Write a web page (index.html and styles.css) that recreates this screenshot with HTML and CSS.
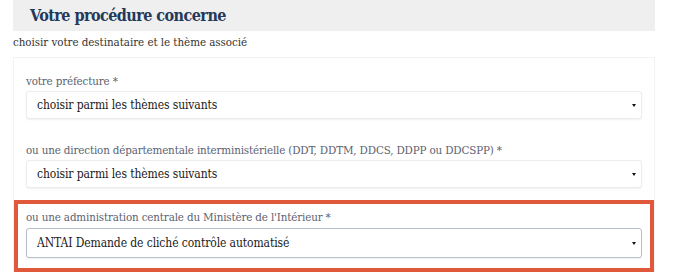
FILE: index.html
```html
<!DOCTYPE html>
<html lang="fr">
<head>
    <meta charset="UTF-8">
    <meta name="viewport" content="width=device-width, initial-scale=1.0">
    <title>Votre procédure concerne</title>
    <link rel="stylesheet" href="styles.css">
</head>
<body>
    <div class="page">
        <div class="section-head">
            <h2>Votre procédure concerne</h2>
        </div>
        <p class="intro">choisir votre destinataire et le thème associé</p>

        <div class="card">
            <div class="field">
                <label for="prefecture">votre préfecture *</label>
                <div class="select-wrap">
                    <select id="prefecture">
                        <option>choisir parmi les thèmes suivants</option>
                    </select>
                </div>
            </div>

            <div class="field">
                <label for="direction">ou une direction départementale interministérielle (DDT, DDTM, DDCS, DDPP ou DDCSPP) *</label>
                <div class="select-wrap">
                    <select id="direction">
                        <option>choisir parmi les thèmes suivants</option>
                    </select>
                </div>
            </div>

            <div class="field highlight">
                <label for="centrale">ou une administration centrale du Ministère de l'Intérieur *</label>
                <div class="select-wrap">
                    <select id="centrale" class="active">
                        <option>ANTAI Demande de cliché contrôle automatisé</option>
                    </select>
                </div>
            </div>
        </div>
    </div>
</body>
</html>
```

FILE: styles.css
```css
body {
    margin: 0;
    background-color: #fff;
    font-family: "DejaVu Serif Condensed", "DejaVu Serif", serif;
    color: #333;
}
.page {
    width: 642px;
    margin-left: 13px;
}
.section-head {
    background-color: #efefef;
    height: 31px;
    padding-left: 17px;
    display: flex;
    align-items: center;
}
.section-head h2 {
    margin: 0;
    font-size: 16px;
    letter-spacing: -0.55px;
    font-weight: bold;
    color: #23395b;
}
.intro {
    margin: 3px 0 0;
    height: 23px;
    line-height: 16px;
    font-size: 11.5px;
    letter-spacing: -0.05px;
    color: #333;
}
.card {
    border: 1px solid #f3f3f3;
    border-bottom: none;
}
.field {
    padding: 14px 12px 0;
}
.field + .field {
    padding-top: 22px;
}
.field.highlight {
    margin-top: 12px;
    padding: 4px 8px 10px;
    border: 4px solid #e0593a;
}
.field label {
    display: block;
    height: 18px;
    line-height: 18px;
    margin-bottom: 1px;
    font-size: 11.5px;
    letter-spacing: -0.15px;
    color: #5b6270;
}
.field.highlight label {
    margin-bottom: 2px;
}
.select-wrap {
    position: relative;
}
.select-wrap::after {
    content: "";
    position: absolute;
    right: 6px;
    top: 50%;
    margin-top: -1px;
    border-left: 2px solid transparent;
    border-right: 2px solid transparent;
    border-top: 3px solid #111;
}
select {
    appearance: none;
    -webkit-appearance: none;
    display: block;
    width: 100%;
    height: 28px;
    padding: 0 10px;
    font-family: inherit;
    font-size: 12px;
    letter-spacing: -0.1px;
    color: #1a1a1a;
    background-color: #fff;
    border: 1px solid #ececec;
    border-radius: 3px;
    box-shadow: 0 1px 2px rgba(0, 0, 0, 0.06);
}
select.active {
    height: 30px;
    border-color: #b7bfcc;
}
```
